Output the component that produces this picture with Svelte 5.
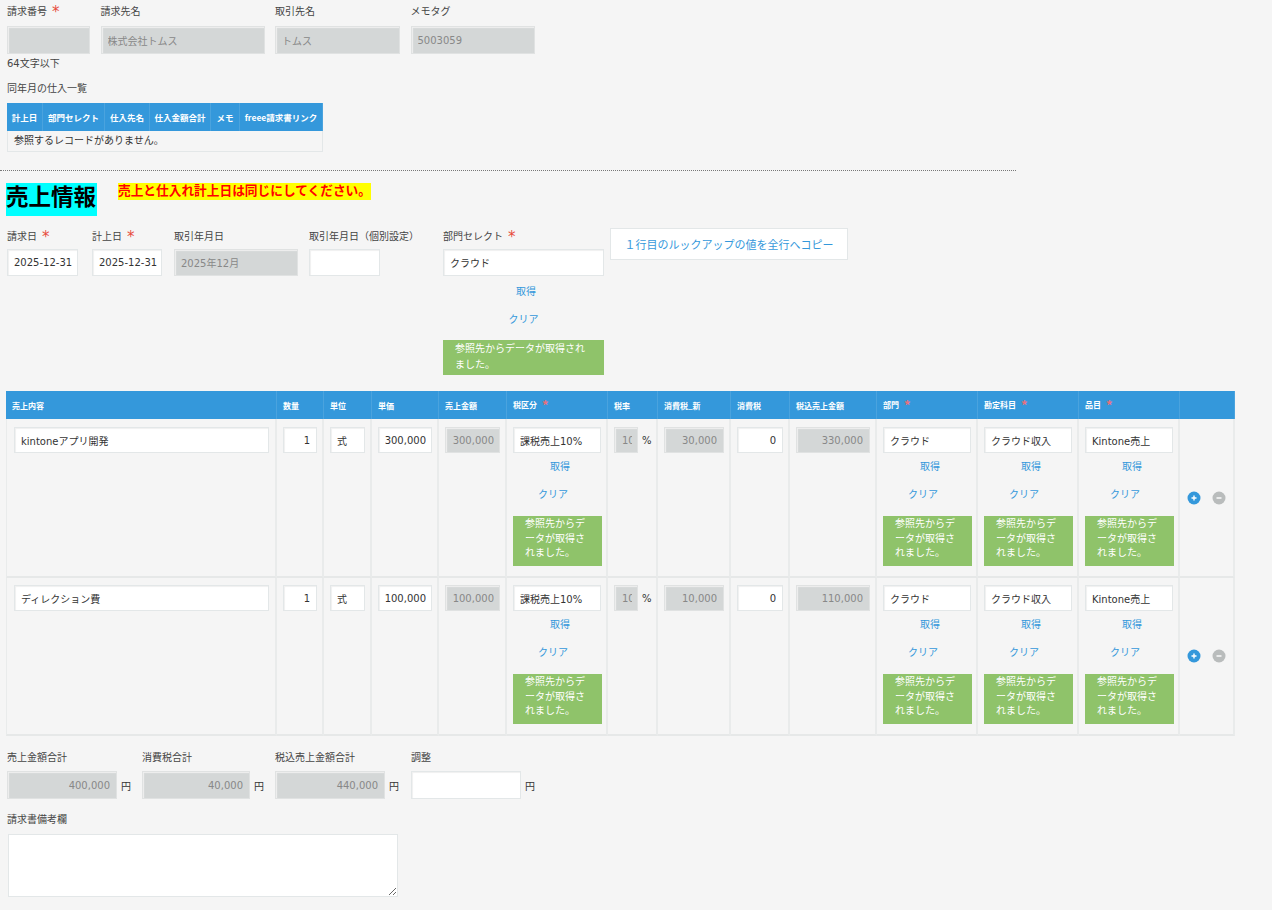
<script>
  const topFields = [
    { label: "請求番号", required: true, value: "", width: 83 },
    { label: "請求先名", value: "株式会社トムス", width: 164 },
    { label: "取引先名", value: "トムス", width: 125 },
    { label: "メモタグ", value: "5003059", width: 124 },
  ];
  const refHeaders = [
    ["計上日", 36], ["部門セレクト", 62], ["仕入先名", 45],
    ["仕入金額合計", 61], ["メモ", 29], ["freee請求書リンク", 83],
  ];
  const salesFields = [
    { label: "請求日", required: true, value: "2025-12-31", width: 71, edit: true },
    { label: "計上日", required: true, value: "2025-12-31", width: 70, edit: true },
    { label: "取引年月日", value: "2025年12月", width: 124 },
    { label: "取引年月日（個別設定）", value: "", width: 71, edit: true },
  ];
  const columns = [
    ["売上内容", 271], ["数量", 47], ["単位", 48], ["単価", 67], ["売上金額", 68],
    ["税区分", 101, true], ["税率", 50], ["消費税_新", 73], ["消費税", 59],
    ["税込売上金額", 87], ["部門", 101, true], ["勘定科目", 101, true], ["品目", 101, true], ["", 55],
  ];
  const rows = [
    { name: "kintoneアプリ開発", price: "300,000", amount: "300,000", tax: "30,000", total: "330,000" },
    { name: "ディレクション費", price: "100,000", amount: "100,000", tax: "10,000", total: "110,000" },
  ];
  const totals = [
    { label: "売上金額合計", value: "400,000", width: 110, field: 135 },
    { label: "消費税合計", value: "40,000", width: 108, field: 133 },
    { label: "税込売上金額合計", value: "440,000", width: 110, field: 136 },
    { label: "調整", value: "", width: 110, field: 130, edit: true },
  ];
</script>

{#snippet star()}<span class="star">*</span>{/snippet}

{#snippet lookup(value, narrow)}
  <input class="input wide" type="text" {value} readonly />
  <div class="link get" class:top-get={!narrow}>取得</div>
  <div class="link clear" class:top-clear={!narrow}>クリア</div>
  <div class="notice" class:narrow>参照先からデータが取得されました。</div>
{/snippet}

<main class="page">
  <section class="fields top">
    {#each topFields as f}
      <div class="field" style:width="{f.width}px">
        <div class="label">{f.label}{#if f.required}{@render star()}{/if}</div>
        <input class="input off" type="text" value={f.value} readonly />
      </div>
    {/each}
  </section>
  <p class="hint">64文字以下</p>
  <p class="ref-title">同年月の仕入一覧</p>
  <table class="ref">
    <thead>
      <tr>
        {#each refHeaders as [name, w]}<th style:width="{w}px">{name}</th>{/each}
      </tr>
    </thead>
    <tbody>
      <tr><td colspan="6">参照するレコードがありません。</td></tr>
    </tbody>
  </table>

  <hr class="divider" />

  <div class="heading">
    <h2>売上情報</h2>
    <strong>売上と仕入れ計上日は同じにしてください。</strong>
  </div>

  <section class="fields sales">
    {#each salesFields as f}
      <div class="field" style:width="{f.width}px">
        <div class="label nowrap">{f.label}{#if f.required}{@render star()}{/if}</div>
        <input class="input" class:off={!f.edit} type="text" value={f.value} readonly />
      </div>
    {/each}
    <div class="field dept">
      <div class="label">部門セレクト{@render star()}</div>
      {@render lookup("クラウド", false)}
    </div>
    <button class="copy" type="button">１行目のルックアップの値を全行へコピー</button>
  </section>

  <table class="lines">
    <thead>
      <tr>
        {#each columns as [name, w, req]}
          <th style:width="{w}px">{name}{#if req}{@render star()}{/if}</th>
        {/each}
      </tr>
    </thead>
    <tbody>
      {#each rows as r}
        <tr>
          <td class="first"><input class="input wide name" type="text" value={r.name} readonly /></td>
          <td><input class="input wide num" type="text" value="1" readonly /></td>
          <td><input class="input wide" type="text" value="式" readonly /></td>
          <td><input class="input wide num tight" type="text" value={r.price} readonly /></td>
          <td><input class="input wide num off tight" type="text" value={r.amount} readonly /></td>
          <td>{@render lookup("課税売上10%", true)}</td>
          <td>
            <div class="rate">
              <input class="input off rate-input" type="text" value="10" readonly />
              <span>%</span>
            </div>
          </td>
          <td><input class="input wide num off" type="text" value={r.tax} readonly /></td>
          <td><input class="input wide num" type="text" value="0" readonly /></td>
          <td><input class="input wide num off" type="text" value={r.total} readonly /></td>
          <td>{@render lookup("クラウド", true)}</td>
          <td>{@render lookup("クラウド収入", true)}</td>
          <td>{@render lookup("Kintone売上", true)}</td>
          <td class="actions">
            <div class="action-icons">
              <svg width="14" height="14" viewBox="0 0 14 14" aria-label="追加">
                <circle cx="7" cy="7" r="6.5" fill="#3498db" />
                <path d="M4.5 7h5M7 4.5v5" stroke="#fff" stroke-width="1.4" />
              </svg>
              <svg width="14" height="14" viewBox="0 0 14 14" aria-label="削除">
                <circle cx="7" cy="7" r="6.5" fill="#b9bcbc" />
                <path d="M4.5 7h5" stroke="#fff" stroke-width="1.4" />
              </svg>
            </div>
          </td>
        </tr>
      {/each}
    </tbody>
  </table>

  <section class="fields totals">
    {#each totals as t}
      <div class="field" style:width="{t.field}px">
        <div class="label">{t.label}</div>
        <div class="with-unit">
          <input class="input num" class:off={!t.edit} style:width="{t.width}px" type="text" value={t.value} readonly />
          <span>円</span>
        </div>
      </div>
    {/each}
  </section>

  <div class="label memo-label">請求書備考欄</div>
  <textarea class="memo"></textarea>
</main>

<style>
  :global(body) {
    background: #f5f5f5;
  }

  .page {
    width: 1272px;
    height: 910px;
    overflow: hidden;
    box-sizing: border-box;
    padding-top: 4px;
    font-family: "DejaVu Sans", "Noto Sans CJK JP", sans-serif;
    font-size: 10px;
    color: #333;
  }

  .fields {
    display: flex;
    align-items: flex-start;
    padding-left: 7px;
  }

  .top {
    gap: 10.5px;
  }

  .label {
    height: 15px;
    line-height: 15px;
    margin-bottom: 7px;
    color: #444;
  }

  .nowrap {
    white-space: nowrap;
  }

  .star {
    color: #e74c3c;
    font-size: 15px;
    margin-left: 5px;
    line-height: 12px;
    vertical-align: -2px;
  }

  .input {
    display: block;
    box-sizing: border-box;
    width: 100%;
    height: 28px;
    padding: 0 6px;
    border: 1px solid #e3e7e8;
    box-shadow: 1px 1px 1px #f0f0f0 inset;
    background: #fff;
    font: inherit;
    color: #333;
    outline: none;
  }

  .off {
    background: #d4d7d7;
    border: 1px solid #e0e2e2;
    color: #888;
    padding: 0 6px;
  }

  .hint {
    margin: 3px 0 0 7px;
    line-height: 14px;
    color: #444;
  }

  .ref-title {
    margin: 11px 0 7px 7px;
    line-height: 14px;
    color: #444;
  }

  .ref {
    margin-left: 7px;
    width: 316px;
    table-layout: fixed;
    border-collapse: separate;
    border-spacing: 0;
  }

  .ref th {
    box-sizing: border-box;
    height: 28px;
    padding: 0;
    background: #3498db;
    color: #fff;
    font-family: "Noto Sans CJK JP", sans-serif;
    font-size: 8.5px;
    font-weight: 700;
    text-align: center;
    white-space: nowrap;
    border-right: 1px solid #4aa3de;
  }

  .ref td {
    box-sizing: border-box;
    height: 21px;
    padding: 0 6px 3px;
    background: #f5f5f5;
    border: 1px solid #e3e7e8;
    border-top: 0;
  }

  .divider {
    margin: 18px 0 0;
    width: 1016px;
    height: 0;
    border: 0;
    border-top: 1px dotted #777;
  }

  .heading {
    display: flex;
    align-items: flex-start;
    gap: 21px;
    margin: 12px 0 0 6px;
  }

  .heading h2 {
    margin: 0;
    width: 91px;
    height: 33px;
    line-height: 29px;
    background: #0ff;
    color: #000;
    font-size: 22.5px;
    font-weight: 700;
    white-space: nowrap;
  }

  .heading strong {
    height: 17px;
    line-height: 15px;
    background: #ff0;
    color: #f00;
    font-size: 12.7px;
    font-weight: 700;
    white-space: nowrap;
  }

  .sales {
    margin-top: 13px;
    gap: 14px;
    height: 162px;
  }

  .sales .field:nth-child(2) {
    margin-right: -2px;
  }

  .sales .field:nth-child(3) {
    margin-right: -3px;
  }

  .sales .field:nth-child(4) {
    margin-right: 49px;
  }

  .sales .label {
    margin-bottom: 5px;
  }

  .sales .input {
    height: 27px;
    padding-right: 1px;
  }

  .dept {
    width: 161px;
    flex: none;
  }

  .copy {
    margin: -1px 0 0 -8px;
    box-sizing: border-box;
    width: 238px;
    height: 32px;
    padding: 0;
    background: #fff;
    border: 1px solid #e3e7e8;
    color: #3498db;
    font: inherit;
    font-family: "Noto Sans CJK JP", sans-serif;
    font-size: 11px;
    white-space: nowrap;
  }

  .link {
    line-height: 14px;
    text-align: center;
    color: #3498db;
    margin-top: 7px;
  }

  .get {
    padding-left: 6px;
  }

  .clear {
    padding-right: 8px;
    margin-top: 14px;
  }

  .top-get {
    padding-left: 5px;
    margin-top: 9px;
  }

  .top-clear {
    padding-right: 0;
  }

  .notice {
    margin-top: 13px;
    padding: 1px 16px 0 12px;
    background: #8fc36a;
    color: #fff;
    line-height: 15.5px;
    box-sizing: border-box;
    height: 35px;
  }

  .notice.narrow {
    width: 89px;
    height: 50px;
    margin-top: 14px;
    padding: 1px 12px 0;
    line-height: 14.5px;
  }

  .lines {
    margin-left: 6px;
    width: 1229px;
    table-layout: fixed;
    border-collapse: separate;
    border-spacing: 0;
  }

  .lines th {
    box-sizing: border-box;
    height: 28px;
    padding: 0 6px;
    background: #3498db;
    border-right: 1px solid #4aa3de;
    color: #fff;
    font-family: "Noto Sans CJK JP", sans-serif;
    font-size: 8px;
    font-weight: 700;
    text-align: left;
    white-space: nowrap;
  }

  .lines th .star {
    font-size: 13px;
    color: #e8707c;
  }

  .lines td {
    box-sizing: border-box;
    height: 158px;
    padding: 7px 5px 0 6px;
    vertical-align: top;
    border-right: 2px solid #e9ebeb;
    border-bottom: 2px solid #e6e8e8;
  }

  .lines tr:first-child td {
    height: 159px;
    padding-top: 8px;
  }

  .lines .first {
    padding-left: 7px;
    border-left: 1px solid #e9ebeb;
  }

  .lines .input {
    height: 26px;
  }

  .num {
    text-align: right;
  }

  .tight {
    padding: 0 5px;
  }

  .name {
    width: 255px;
  }

  .rate {
    display: flex;
    align-items: center;
    gap: 4px;
    height: 26px;
  }

  .rate-input {
    width: 24px;
    padding: 0 5px 0 7px;
  }

  .lines .actions,
  .lines tr:first-child .actions {
    vertical-align: middle;
    padding: 0;
  }

  .action-icons {
    display: flex;
    gap: 11px;
    padding-left: 7px;
  }

  .totals {
    margin-top: 14px;
  }

  .totals .label {
    margin-bottom: 6px;
  }

  .with-unit {
    display: flex;
    align-items: center;
    gap: 4px;
  }

  .memo-label {
    margin: 13px 0 7px 7px;
  }

  .memo {
    display: block;
    box-sizing: border-box;
    margin-left: 8px;
    width: 390px;
    height: 63px;
    background: #fff;
    border: 1px solid #e3e7e8;
  }
</style>
